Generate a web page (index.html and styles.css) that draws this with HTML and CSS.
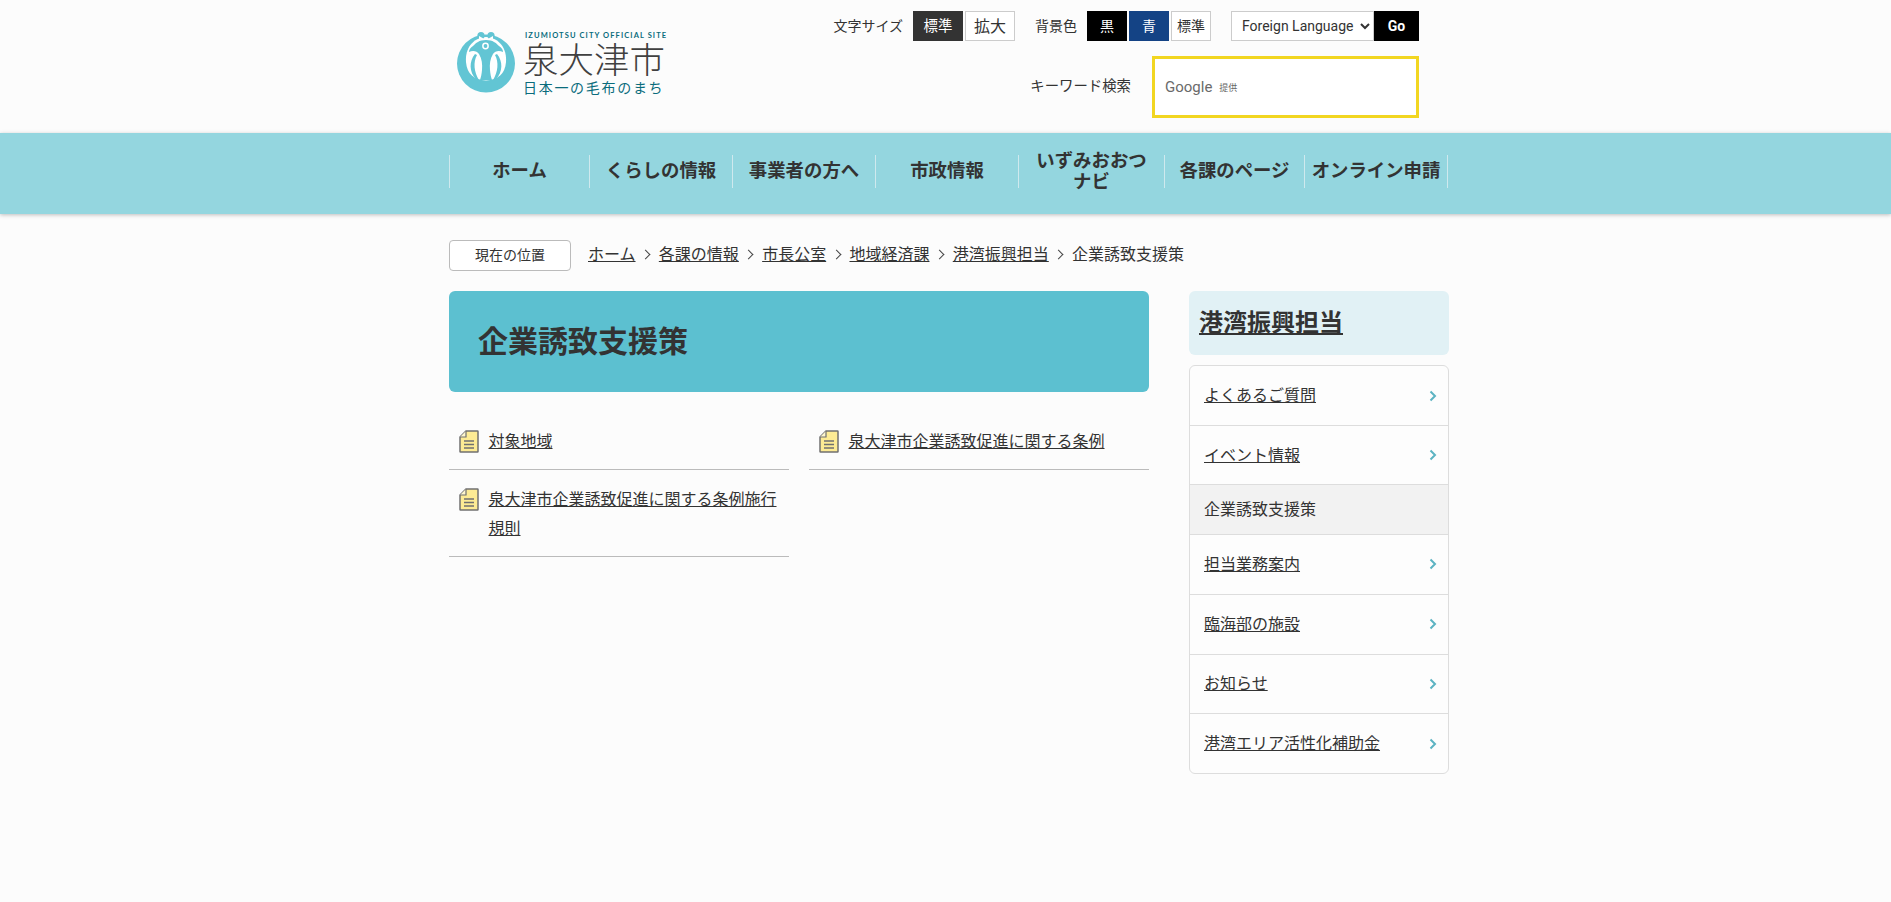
FILE: index.html
```html
<!DOCTYPE html>
<html lang="ja">
<head>
<meta charset="utf-8">
<title>企業誘致支援策 | 泉大津市</title>
<link rel="stylesheet" href="styles.css">
</head>
<body>
<header class="site-header">
  <div class="wrap header-inner">
    <a class="logo" href="#">
      <svg class="logo-mark" viewBox="0 0 58 61" aria-hidden="true">
        <circle cx="29" cy="31.500" r="29" fill="#62c5d4"/>
        <path d="M29 5 C15 6 8 17 9 30 C10 42 17 48 29 48.500 C41 48 48 42 49 30 C50 17 43 6 29 5Z" fill="#fff"/>
        <circle cx="24" cy="3.600" r="3.600" fill="#62c5d4"/>
        <circle cx="34" cy="3.600" r="3.600" fill="#62c5d4"/>
        <path d="M22 4 L29 8 L36 4 L36 7 L29 10 L22 7Z" fill="#fff"/>
        <path d="M29 8 C22 8 19 11 16 14 C13 16 12 18 12 20 C16 18 20 19 22 22 C25 27 25.500 32 25 38 C24.700 42 24 45 23 48 L35 48 C34 45 33.300 42 33 38 C32.500 32 33 27 36 22 C38 19 42 18 46 20 C46 18 45 16 42 14 C39 11 36 8 29 8Z" fill="#62c5d4"/>
        <circle cx="28.500" cy="14" r="3.400" fill="#fff"/>
        <circle cx="28.500" cy="14" r="1.900" fill="#62c5d4"/>
        <path d="M18 22 C12 29 12 40 19 47 L22 48 C17 40 16 30 20 23Z" fill="#62c5d4"/>
        <path d="M40 22 C46 29 46 40 39 47 L36 48 C41 40 42 30 38 23Z" fill="#62c5d4"/>
      </svg>
      <span class="logo-text">
        <span class="logo-en">IZUMIOTSU CITY OFFICIAL SITE</span>
        <span class="logo-ja">泉大津市</span>
        <span class="logo-sub">日本一の毛布のまち</span>
      </span>
    </a>
    <div class="tools">
      <div class="tool-row">
        <span class="tool-label">文字サイズ</span>
        <div class="btn-group">
          <button class="tool-btn size-btn is-current">標準</button>
          <button class="tool-btn size-btn size-large">拡大</button>
        </div>
        <span class="tool-label label-bg">背景色</span>
        <div class="btn-group">
          <button class="tool-btn color-btn is-black">黒</button>
          <button class="tool-btn color-btn is-blue">青</button>
          <button class="tool-btn color-btn">標準</button>
        </div>
        <div class="lang">
          <select class="lang-select"><option>Foreign Language</option></select>
          <button class="lang-go">Go</button>
        </div>
      </div>
      <div class="search-row">
        <span class="tool-label label-search">キーワード検索</span>
        <div class="search-box">
          <span class="google">Google</span>
          <span class="google-by">提供</span>
        </div>
      </div>
    </div>
  </div>
</header>

<nav class="global-nav">
  <ul class="wrap nav-list">
    <li class="nav-item"><a href="#">ホーム</a></li>
    <li class="nav-item"><a href="#">くらしの情報</a></li>
    <li class="nav-item"><a href="#">事業者の方へ</a></li>
    <li class="nav-item"><a href="#">市政情報</a></li>
    <li class="nav-item nav-wrap"><a href="#">いずみおおつナビ</a></li>
    <li class="nav-item"><a href="#">各課のページ</a></li>
    <li class="nav-item"><a href="#">オンライン申請</a></li>
  </ul>
</nav>

<div class="wrap crumbs">
  <span class="crumb-tag"><span class="crumb-tag-text">現在の位置</span></span>
  <a href="#">ホーム</a><span class="crumb-sep"></span>
  <a href="#">各課の情報</a><span class="crumb-sep"></span>
  <a href="#">市長公室</a><span class="crumb-sep"></span>
  <a href="#">地域経済課</a><span class="crumb-sep"></span>
  <a href="#">港湾振興担当</a><span class="crumb-sep"></span>
  <span>企業誘致支援策</span>
</div>

<div class="wrap page">
  <main>
    <h1 class="page-title">企業誘致支援策</h1>
    <ul class="doc-list">
      <li class="doc-item">
        <svg class="doc-icon" viewBox="0 0 20 23" aria-hidden="true"><path d="M7 1H18.500a.5.5 0 0 1 .5.5V21.500a.5.5 0 0 1-.5.5H1.500a.5.5 0 0 1-.5-.5V7Z" fill="#fdeb94" stroke="#707070" stroke-width="1.500"/><path d="M7 1V7H1" fill="#fff7cf" stroke="#707070" stroke-width="1.200"/><path d="M5 11H15M5 14.500H15M5 18H15" stroke="#707070" stroke-width="1.300"/></svg>
        <a href="#">対象地域</a>
      </li>
      <li class="doc-item">
        <svg class="doc-icon" viewBox="0 0 20 23" aria-hidden="true"><path d="M7 1H18.500a.5.5 0 0 1 .5.5V21.500a.5.5 0 0 1-.5.5H1.500a.5.5 0 0 1-.5-.5V7Z" fill="#fdeb94" stroke="#707070" stroke-width="1.500"/><path d="M7 1V7H1" fill="#fff7cf" stroke="#707070" stroke-width="1.200"/><path d="M5 11H15M5 14.500H15M5 18H15" stroke="#707070" stroke-width="1.300"/></svg>
        <a href="#">泉大津市企業誘致促進に関する条例</a>
      </li>
      <li class="doc-item">
        <svg class="doc-icon" viewBox="0 0 20 23" aria-hidden="true"><path d="M7 1H18.500a.5.5 0 0 1 .5.5V21.500a.5.5 0 0 1-.5.5H1.500a.5.5 0 0 1-.5-.5V7Z" fill="#fdeb94" stroke="#707070" stroke-width="1.500"/><path d="M7 1V7H1" fill="#fff7cf" stroke="#707070" stroke-width="1.200"/><path d="M5 11H15M5 14.500H15M5 18H15" stroke="#707070" stroke-width="1.300"/></svg>
        <a href="#">泉大津市企業誘致促進に関する条例施行規則</a>
      </li>
    </ul>
  </main>
  <aside class="side">
    <h2 class="side-title"><a href="#">港湾振興担当</a></h2>
    <ul class="side-menu">
      <li class="side-item side-short"><a href="#">よくあるご質問</a><svg class="chev" viewBox="0 0 8 12" aria-hidden="true"><path d="M1.500 1.500 6 6 1.500 10.500" fill="none" stroke="#5cb3c2" stroke-width="2"/></svg></li>
      <li class="side-item side-short"><a href="#">イベント情報</a><svg class="chev" viewBox="0 0 8 12" aria-hidden="true"><path d="M1.500 1.500 6 6 1.500 10.500" fill="none" stroke="#5cb3c2" stroke-width="2"/></svg></li>
      <li class="side-item is-current"><span>企業誘致支援策</span></li>
      <li class="side-item"><a href="#">担当業務案内</a><svg class="chev" viewBox="0 0 8 12" aria-hidden="true"><path d="M1.500 1.500 6 6 1.500 10.500" fill="none" stroke="#5cb3c2" stroke-width="2"/></svg></li>
      <li class="side-item"><a href="#">臨海部の施設</a><svg class="chev" viewBox="0 0 8 12" aria-hidden="true"><path d="M1.500 1.500 6 6 1.500 10.500" fill="none" stroke="#5cb3c2" stroke-width="2"/></svg></li>
      <li class="side-item"><a href="#">お知らせ</a><svg class="chev" viewBox="0 0 8 12" aria-hidden="true"><path d="M1.500 1.500 6 6 1.500 10.500" fill="none" stroke="#5cb3c2" stroke-width="2"/></svg></li>
      <li class="side-item"><a href="#">港湾エリア活性化補助金</a><svg class="chev" viewBox="0 0 8 12" aria-hidden="true"><path d="M1.500 1.500 6 6 1.500 10.500" fill="none" stroke="#5cb3c2" stroke-width="2"/></svg></li>
    </ul>
  </aside>
</div>
</body>
</html>
```
FILE: styles.css
```css
* { box-sizing: border-box; }
html, body { margin: 0; padding: 0; }
body {
  background: #fcfcfc;
  color: #333;
  font-family: "Noto Sans CJK JP", "Noto Sans", sans-serif;
  font-size: 16px;
  min-height: 902px;
}
a { color: #333; }
ul { list-style: none; margin: 0; padding: 0; }
h1, h2 { margin: 0; }
.wrap { width: 1001px; margin-left: 449px; }

/* header */
.site-header { height: 133px; }
.header-inner { display: flex; justify-content: space-between; }
.logo { display: flex; gap: 10px; padding: 32px 0 0 8px; text-decoration: none; }
.logo-mark { width: 58px; height: 61px; display: block; }
.logo-text { display: flex; flex-direction: column; width: 142px; }
.logo-en { font: 700 7.500px/8px "Lato", sans-serif; letter-spacing: 1.100px; color: #0a6c7c; white-space: nowrap; }
.logo-ja { font-size: 35.500px; line-height: 36px; margin: 0 0 0 -2px; color: #404040; white-space: nowrap; font-weight: 300; }
.logo-sub { font-size: 14px; line-height: 16px; letter-spacing: 1.700px; margin: 3px 0 0 -2px; color: #0a6c7c; white-space: nowrap; font-weight: 400; }

.tools { display: flex; flex-direction: column; align-items: flex-end; padding: 10px 31px 0 0; }
.tool-row { display: flex; align-items: center; height: 30px; margin-top: 1px; }
.tool-label { font-size: 14px; line-height: 28px; height: 30px; color: #333; white-space: nowrap; }
.label-bg { margin-left: 20px; }
.label-search { font-size: 14.400px; line-height: 26px; }
.btn-group { display: flex; gap: 2px; margin-left: 10px; }
.tool-btn {
  height: 30px; padding: 0 0 2px; border: 1px solid #ccc; background: #fff; color: #333;
  font-family: inherit; font-size: 14.400px; line-height: 1;
}
.size-btn { width: 50px; }
.size-large { font-size: 16px; }
.color-btn { width: 40px; font-size: 14px; }
.is-current.tool-btn { background: #333; border-color: #333; color: #fff; }
.is-black { background: #000; border-color: #000; color: #fff; }
.is-blue { background: #144385; border-color: #144385; color: #fff; }
.lang { display: flex; margin-left: 20px; }
.lang-select {
  width: 143px; height: 30px; border: 1px solid #ccc; background: #fff; color: #333;
  font: 14px "Roboto", sans-serif; padding: 0 0 0 6px;
}
.lang-go {
  width: 45px; height: 30px; border: 0; background: #000; color: #fff;
  font: 700 14px "Roboto", sans-serif; padding: 0;
}
.search-row { display: flex; align-items: center; gap: 21px; margin-top: 15px; }
.search-box {
  width: 267px; height: 62px; border: 3px solid #f2d621; background: #fff;
  display: flex; align-items: center; padding-left: 10px; gap: 7px;
}
.google { font: 15px "Roboto", sans-serif; color: #6a6a6a; }
.google-by { font-size: 9px; color: #666; }

/* global nav */
.global-nav { height: 81px; background: #94d6df; box-shadow: 0 1px 4px rgba(0,0,0,.25); padding-top: 22px; }
.nav-list { display: grid; grid-template-columns: 140px 143px 143px 143px 146px 140px 144px; width: 1000px; }
.nav-item {
  height: 33px; display: flex; align-items: center; justify-content: center; text-align: center;
  border-left: 1px solid #cfe9ee; font-size: 18.400px; font-weight: 700; line-height: 21px;
}
.nav-item:last-child { border-right: 1px solid #cfe9ee; }
.nav-item a { color: #333; text-decoration: none; white-space: nowrap; margin-top: -4px; }
.nav-wrap a { white-space: normal; padding: 0 13px; }

/* crumbs */
.crumbs { display: flex; align-items: center; margin-top: 26px; height: 31px; font-size: 16px; line-height: 25px; white-space: nowrap; }
.crumbs > a, .crumbs > span:last-child { margin-top: -5px; }
.crumb-tag {
  width: 122px; height: 31px; border: 1px solid #bbb; border-radius: 4px; background: #fff;
  display: flex; align-items: center; justify-content: center; font-size: 14px; margin-right: 17px;
}
.crumb-tag-text { margin-top: -3px; }
.crumb-sep { width: 23.300px; display: flex; justify-content: center; margin-top: -3px; }
.crumb-sep::before {
  content: ""; width: 6px; height: 6px; border-top: 1.200px solid #444; border-right: 1.200px solid #444;
  transform: rotate(45deg); margin-left: -3px;
}

/* layout */
.page { display: grid; grid-template-columns: 700px 260px; column-gap: 40px; margin-top: 20px; }
.page-title {
  height: 101px; display: flex; align-items: center; padding: 0 0 5px 29px;
  background: #5cc0d0; border-radius: 6px; font-size: 30px; font-weight: 700; color: #333;
}
.doc-list { display: grid; grid-template-columns: 340px 340px; column-gap: 20px; margin-top: 20px; }
.doc-item {
  display: flex; align-items: flex-start; gap: 9.500px; padding: 14px 10px 14px 10px;
  border-bottom: 1px solid #bbb; line-height: 29px;
}
.doc-icon { width: 20px; height: 23px; flex: none; margin-top: 4px; }

/* side */
.side-title {
  height: 64px; display: flex; align-items: center; padding: 0 0 5px 10px;
  background: #e1f1f5; border-radius: 6px; font-size: 24px; font-weight: 700;
}
.side-menu { margin-top: 10px; border: 1px solid #ddd; border-radius: 6px; overflow: hidden; background: #fdfdfd; }
.side-item {
  height: 59.800px; display: flex; align-items: center; justify-content: space-between;
  padding: 0 11px 0 14px; border-top: 1px solid #ddd; font-size: 16px;
}
.side-item:first-child { border-top: 0; }
.side-item.side-short { height: 59px; }
.side-item > a, .side-item > span { margin-top: -3px; }
.side-item.is-current { height: 50px; background: #f2f2f2; }
.chev { width: 8px; height: 12px; flex: none; }
```
